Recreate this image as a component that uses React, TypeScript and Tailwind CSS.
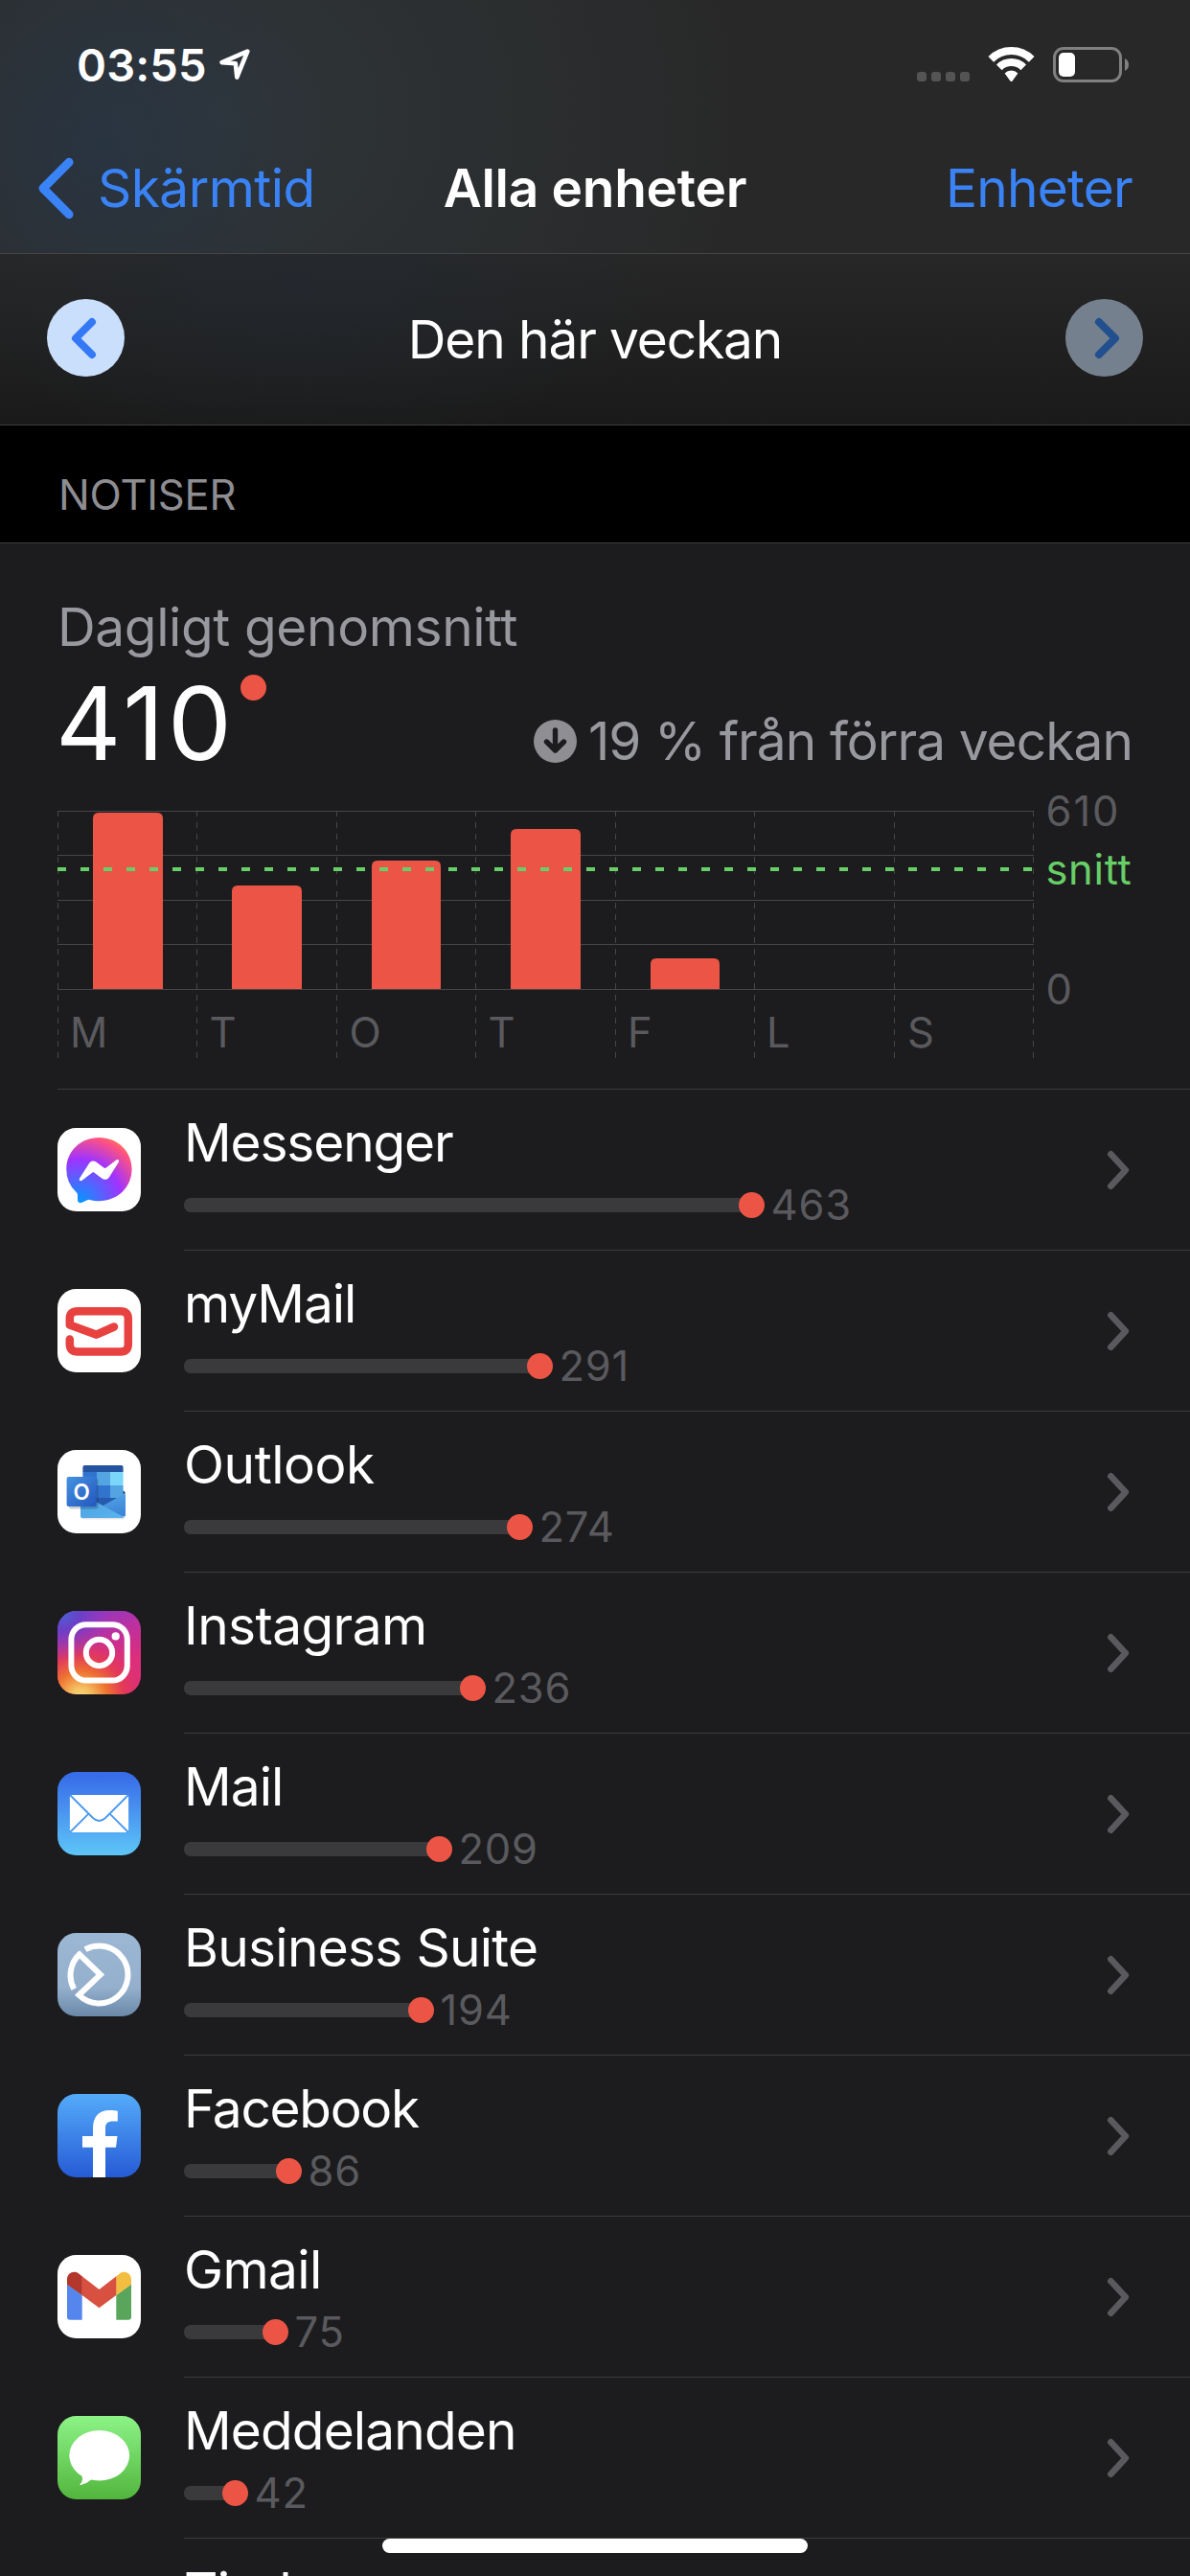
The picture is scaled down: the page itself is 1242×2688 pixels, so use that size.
import type { ReactNode } from "react";

type Day = { label: string; x: number; bar?: { x: number; y: number; w: number } };

const days: Day[] = [
  { label: "M", x: 60.5, bar: { x: 97, y: 848, w: 73 } },
  { label: "T", x: 205.5, bar: { x: 242, y: 924, w: 73 } },
  { label: "O", x: 351.5, bar: { x: 388, y: 898, w: 72 } },
  { label: "T", x: 496.5, bar: { x: 533, y: 865, w: 73 } },
  { label: "F", x: 642.5, bar: { x: 679, y: 1000, w: 72 } },
  { label: "L", x: 787.5 },
  { label: "S", x: 933.5 },
];

function StatusBar() {
  return (
    <div className="flex h-[132px] items-start justify-between">
      <div className="flex pt-[46px] pl-20">
        <span className="w-[146px] text-[47px] leading-[44px] font-semibold tracking-[0.14px]">03:55</span>
        <svg className="mt-[2px] h-[38px] w-[38px]" viewBox="226 48 38 38" fill="none">
          <path
            d="M258.3 53.6L231.6 65.2L245.8 66.3L247.3 80.6Z"
            stroke="#fff"
            strokeWidth="4.6"
            strokeLinejoin="round"
          />
        </svg>
      </div>
      <svg className="mt-[45px] mr-[60px] h-[45px] w-[230px]" viewBox="952 45 230 45" fill="none">
        <g fill="#545454">
          <rect x="957" y="75" width="10" height="10" rx="3" />
          <rect x="972" y="75" width="10" height="10" rx="3" />
          <rect x="987" y="75" width="10" height="10" rx="3" />
          <rect x="1002" y="75" width="10" height="10" rx="3" />
        </g>
        <g stroke="#fff" strokeWidth="8">
          <path d="M1034.3 61.8A30 30 0 0 1 1076.7 61.8" />
          <path d="M1042.8 70.3A18 18 0 0 1 1068.2 70.3" />
        </g>
        <path d="M1048.6 76.4A9.8 9.8 0 0 1 1062.4 76.4L1056.6 84.4Q1055.5 85.6 1054.4 84.4Z" fill="#fff" />
        <rect x="1100.5" y="50.5" width="69" height="34" rx="9.5" stroke="#808080" strokeWidth="3" />
        <path d="M1174 61Q1178 63 1178 67.5T1174 74Z" fill="#808080" />
        <rect x="1105" y="55" width="17" height="25" rx="5" fill="#fff" />
      </svg>
    </div>
  );
}

function NavBar() {
  return (
    <div className="grid h-[132px] grid-cols-[1fr_auto_1fr] items-center pb-1 text-[55px] leading-[66px]">
      <div className="flex items-center pl-9 text-[#3a83f7]">
        <svg className="h-[68px] w-[44px]" viewBox="36 162 44 68" fill="none">
          <path
            d="M72 169.3L45 196.5L72 223.7"
            stroke="#3a83f7"
            strokeWidth="9"
            strokeLinecap="round"
            strokeLinejoin="round"
          />
        </svg>
        <span className="ml-[22px] tracking-[-0.56px]">Skärmtid</span>
      </div>
      <h1 className="font-semibold tracking-[-0.27px]">Alla enheter</h1>
      <span className="pr-[60px] text-right tracking-[-0.78px] text-[#3a83f7]">Enheter</span>
    </div>
  );
}

function WeekBar() {
  return (
    <div className="flex h-[179px] items-center justify-between border-b border-[#3f3f40] bg-[radial-gradient(ellipse_400px_170px_at_310px_30px,#232a3399,#232a3300),linear-gradient(#272727,#1a1a1a)] px-[49px]">
      <span className="mb-[3px] flex size-[81px] items-center justify-center rounded-full bg-[#c9dffc]">
        <svg className="mr-1 size-[46px]" viewBox="0 0 46 46" fill="none">
          <path d="M31 6L14 23L31 40" stroke="#3478f6" strokeWidth="8" strokeLinecap="round" strokeLinejoin="round" />
        </svg>
      </span>
      <h2 className="text-[55px] leading-[66px] tracking-[-1.13px]">Den här veckan</h2>
      <span className="mb-[3px] flex size-[81px] items-center justify-center rounded-full bg-[#75808e]">
        <svg className="ml-1 size-[46px]" viewBox="0 0 46 46" fill="none">
          <path d="M15 6L32 23L15 40" stroke="#22508f" strokeWidth="8" strokeLinecap="round" strokeLinejoin="round" />
        </svg>
      </span>
    </div>
  );
}

function Summary() {
  return (
    <div className="px-[60px] pt-[54px]">
      <p className="text-[55px] leading-[66px] tracking-[-0.39px] text-[#98989f]">Dagligt genomsnitt</p>
      <div className="mt-[14px] flex h-[107px] items-start">
        <span className="-ml-[2px] text-[106px] leading-[107px] tracking-[3.74px]">410</span>
        <span className="mt-[3px] ml-[5px] size-[27px] rounded-full bg-[#ec5545]" />
        <div className="mt-[39px] ml-auto flex h-[66px] items-center text-[#98989f]">
          <svg className="mr-3 size-[45px]" viewBox="0 0 45 45" fill="none">
            <circle cx="22.5" cy="22.5" r="22.5" fill="#8e8e93" />
            <path
              d="M22.5 11V32M13.5 23L22.5 32L31.5 23"
              stroke="#1c1c1e"
              strokeWidth="5.4"
              strokeLinecap="round"
              strokeLinejoin="round"
            />
          </svg>
          <span className="text-[55px] leading-[66px] tracking-[-0.93px]">19 % från förra veckan</span>
        </div>
      </div>
    </div>
  );
}

function Chart() {
  return (
    <svg
      className="mt-3 block h-[316px] w-[1242px] font-['Inter',sans-serif] text-[43.5px]"
      viewBox="0 820 1242 316"
      fill="none"
    >
      <g stroke="#464649" strokeWidth="1">
        {[846.5, 892.5, 939.5, 985.5, 1032.5].map((y) => (
          <path key={y} d={`M60 ${y}H1079`} />
        ))}
        {[...days.map((d) => d.x), 1078.5].map((x) => (
          <path key={x} d={`M${x} 846V1104`} strokeDasharray="6 6" />
        ))}
      </g>
      {days.map(
        ({ x, bar }) =>
          bar && (
            <path
              key={x}
              d={`M${bar.x} 1032V${bar.y + 6}q0 -6 6 -6h${bar.w - 12}q6 0 6 6V1032Z`}
              fill="#ec5545"
            />
          ),
      )}
      <path d="M60 907H1077" stroke="#68ce67" strokeWidth="4" strokeDasharray="9 15" />
      <g fill="#5a5a5e">
        {days.map(({ label, x }) => (
          <text key={x} x={x + (label === "T" ? 13 : label === "O" ? 13 : label === "S" ? 13.5 : 12.5)} y="1093">
            {label}
          </text>
        ))}
        <text x="1091.5" y="862" letterSpacing="1.9">
          610
        </text>
        <text x="1091.5" y="1047.5">
          0
        </text>
      </g>
      <text x="1091.5" y="922.5" fill="#68ce67" letterSpacing="0.66">
        snitt
      </text>
    </svg>
  );
}

function MessengerIcon() {
  return (
    <>
      <defs>
        <radialGradient id="messenger" cx="0.19" cy="0.99" r="1.09">
          <stop offset="0" stopColor="#0099ff" />
          <stop offset="0.61" stopColor="#a033ff" />
          <stop offset="0.93" stopColor="#ff5280" />
          <stop offset="1" stopColor="#ff7061" />
        </radialGradient>
      </defs>
      <rect width="87" height="87" fill="#fff" />
      <path
        transform="translate(9.3 10) scale(2.845)"
        fill="url(#messenger)"
        d="M.001 11.639C.001 4.949 5.241 0 12.001 0S24 4.95 24 11.639c0 6.689-5.24 11.638-12 11.638-1.21 0-2.38-.16-3.47-.46a.96.96 0 00-.64.05l-2.39 1.05a.96.96 0 01-1.35-.85l-.07-2.14a.97.97 0 00-.32-.68A11.39 11.389 0 01.002 11.64zm8.32-2.19l-3.52 5.6c-.35.53.32 1.139.82.75l3.79-2.87c.26-.2.6-.2.87 0l2.8 2.1c.84.63 2.04.4 2.6-.48l3.52-5.6c.35-.53-.32-1.13-.82-.75l-3.79 2.87c-.25.2-.6.2-.86 0l-2.8-2.1a1.8 1.8 0 00-2.61.48z"
      />
    </>
  );
}

function MyMailIcon() {
  return (
    <>
      <rect width="87" height="87" fill="#fff" />
      <path
        d="M12.8 52.5V57.5Q12.8 65.5 20.8 65.5H66Q73.8 65.5 73.8 57.5V31Q73.8 23.2 66 23.2H20.8Q12.8 23.2 12.8 31V37.6L40.7 47.7L59 39.5"
        stroke="#e74240"
        strokeWidth="8.5"
        strokeLinecap="round"
        strokeLinejoin="round"
      />
    </>
  );
}

function OutlookIcon() {
  return (
    <>
      <defs>
        <linearGradient id="outlook-tile" x1="0" y1="0" x2="1" y2="1">
          <stop offset="0" stopColor="#4592e0" />
          <stop offset="1" stopColor="#2357bf" />
        </linearGradient>
        <linearGradient id="outlook-left" x1="0" y1="0" x2="1" y2="1">
          <stop offset="0" stopColor="#4c9fe0" />
          <stop offset="1" stopColor="#5cb4ee" />
        </linearGradient>
        <linearGradient id="outlook-right" x1="0" y1="0" x2="0.3" y2="1">
          <stop offset="0" stopColor="#56a9e6" />
          <stop offset="1" stopColor="#3e86d8" />
        </linearGradient>
      </defs>
      <rect width="87" height="87" fill="#fff" />
      <rect x="24.5" y="61" width="46" height="11.5" rx="2" fill="#00000018" />
      <path d="M68 42L71 44.5L68 47Z" fill="#123b6d" />
      <path d="M26.4 23V18Q26.4 16 28.4 16H66.6Q68.6 16 68.6 18V23Z" fill="#2454a0" />
      <rect x="26.4" y="23" width="14.8" height="28" fill="#3074cd" />
      <rect x="41" y="23" width="14" height="14" fill="#54a4e2" />
      <rect x="55" y="23" width="13.6" height="14" fill="#7bd7fa" />
      <rect x="41" y="37" width="14" height="13.5" fill="#3074cd" />
      <rect x="55" y="37" width="13.6" height="13.5" fill="#54a4e2" />
      <path d="M26.4 50H64L54 60H30Z" fill="#265aae" />
      <path d="M71 45V69L66 70L40 62L48.5 57.5Z" fill="url(#outlook-right)" />
      <path d="M24 47L41 54.5L69.5 70.2Q68.5 71 67.5 71H26Q24 71 24 69Z" fill="url(#outlook-left)" />
      <rect x="12" y="30" width="30.5" height="31.5" rx="2" fill="#00000030" />
      <rect x="9.6" y="28" width="31.1" height="31" rx="2" fill="url(#outlook-tile)" />
      <text
        x="25.1"
        y="51.8"
        textAnchor="middle"
        fill="#fff"
        className="font-['Inter',sans-serif] text-[22.5px] font-semibold"
      >
        O
      </text>
    </>
  );
}

function InstagramIcon() {
  return (
    <>
      <defs>
        <linearGradient id="insta-base" x1="0.3" y1="0" x2="0.7" y2="1">
          <stop offset="0" stopColor="#8a3ac8" />
          <stop offset="0.35" stopColor="#bb30a0" />
          <stop offset="0.7" stopColor="#dc2e7c" />
          <stop offset="1" stopColor="#dc2f78" />
        </linearGradient>
        <radialGradient id="insta-warm" cx="0.28" cy="1.05" r="0.85">
          <stop offset="0" stopColor="#f9de85" />
          <stop offset="0.14" stopColor="#f6c463" />
          <stop offset="0.38" stopColor="#ee7330" />
          <stop offset="0.62" stopColor="#e63b52" stopOpacity="0.85" />
          <stop offset="1" stopColor="#d92e7f" stopOpacity="0" />
        </radialGradient>
        <radialGradient id="insta-cool" cx="0.05" cy="0" r="0.6">
          <stop offset="0" stopColor="#4667d8" />
          <stop offset="0.4" stopColor="#6240c8" stopOpacity="0.8" />
          <stop offset="1" stopColor="#8a3ac8" stopOpacity="0" />
        </radialGradient>
      </defs>
      <rect width="87" height="87" fill="url(#insta-base)" />
      <rect width="87" height="87" fill="url(#insta-warm)" />
      <rect width="87" height="87" fill="url(#insta-cool)" />
      <g stroke="#fff" strokeWidth="6">
        <rect x="14.4" y="14.2" width="58.4" height="58.4" rx="15.5" />
        <circle cx="43.5" cy="43.5" r="13.7" />
      </g>
      <circle cx="60.7" cy="26.4" r="4.1" fill="#fff" />
    </>
  );
}

function MailIcon() {
  return (
    <>
      <defs>
        <linearGradient id="mail" x1="0" y1="0" x2="0" y2="1">
          <stop offset="0.05" stopColor="#386de9" />
          <stop offset="1" stopColor="#5ec6f8" />
        </linearGradient>
      </defs>
      <rect width="87" height="87" fill="url(#mail)" />
      <rect x="12.9" y="24" width="61.2" height="39" rx="2.2" fill="#fff" />
      <g stroke="#4b98f1" strokeWidth="1.8">
        <path d="M13 24L37 48Q43.5 54 50 48L74 24" />
        <path d="M13 63L32.4 43.6M74 63L54.6 43.6" />
      </g>
    </>
  );
}

function BusinessSuiteIcon() {
  return (
    <>
      <defs>
        <linearGradient id="business" x1="0" y1="0" x2="0" y2="1">
          <stop offset="0" stopColor="#9cb7d3" />
          <stop offset="0.65" stopColor="#94b0cd" />
          <stop offset="1" stopColor="#6b88a9" />
        </linearGradient>
      </defs>
      <rect width="87" height="87" fill="url(#business)" />
      <path
        d="M17.2 58.5A30 30 0 0 1 23 22.3L44.8 43.5L22.3 64.7A30 30 0 1 0 29 17.2"
        stroke="#fff"
        strokeWidth="6"
      />
    </>
  );
}

function FacebookIcon() {
  return (
    <>
      <defs>
        <linearGradient id="facebook" x1="0" y1="0" x2="0" y2="1">
          <stop offset="0" stopColor="#54abf9" />
          <stop offset="1" stopColor="#265bd6" />
        </linearGradient>
      </defs>
      <rect width="87" height="87" fill="url(#facebook)" />
      <path
        d="M37 87V55.7H26V44H37V36C37 23.5 43.5 17 54 17C58 17 61 17.4 62.8 17.8V28.4H58C52.3 28.4 50 30.8 50 35.5V44H62.5L61 55.7H50V87Z"
        fill="#fff"
      />
    </>
  );
}

function GmailIcon() {
  return (
    <>
      <rect width="87" height="87" fill="#fff" />
      <path d="M10 30.4L25.7 42V67.7H13Q10 67.7 10 64.7Z" fill="#5486ee" />
      <path d="M77 30.4L61.3 42V67.7H74Q77 67.7 77 64.7Z" fill="#5aa55c" />
      <path d="M10 30.7V25.5C10 18.6 17.5 15.4 22.6 19.7L25.9 22.4V42.2Z" fill="#b2362b" />
      <path d="M77 30.7V25.5C77 18.6 69.5 15.4 64.4 19.7L61.1 22.4V42.2Z" fill="#f2be42" />
      <path d="M25.7 22.3L43.5 36L61.3 22.3V42L43.5 55.3L25.7 42Z" fill="#d85140" />
    </>
  );
}

function MessagesIcon() {
  return (
    <>
      <defs>
        <linearGradient id="messages" x1="0" y1="0" x2="0" y2="1">
          <stop offset="0" stopColor="#8cf386" />
          <stop offset="1" stopColor="#52b63d" />
        </linearGradient>
      </defs>
      <rect width="87" height="87" fill="url(#messages)" />
      <ellipse cx="43.7" cy="41.3" rx="31.4" ry="26.3" fill="#fff" />
      <path d="M24 60Q28.5 66 23.4 71.4Q23.2 72.2 24.3 72Q31 70.4 35.5 66.2Z" fill="#fff" />
    </>
  );
}

type AppRow = { name: string; count?: number; tracking: string; icon?: ReactNode };

const apps: AppRow[] = [
  { name: "Messenger", count: 463, tracking: "tracking-[-1.15px]", icon: <MessengerIcon /> },
  { name: "myMail", count: 291, tracking: "tracking-[-1.09px]", icon: <MyMailIcon /> },
  { name: "Outlook", count: 274, tracking: "tracking-[-0.47px]", icon: <OutlookIcon /> },
  { name: "Instagram", count: 236, tracking: "tracking-[-0.6px]", icon: <InstagramIcon /> },
  { name: "Mail", count: 209, tracking: "tracking-[-0.96px]", icon: <MailIcon /> },
  { name: "Business Suite", count: 194, tracking: "tracking-[-0.73px]", icon: <BusinessSuiteIcon /> },
  { name: "Facebook", count: 86, tracking: "tracking-[-1.3px]", icon: <FacebookIcon /> },
  { name: "Gmail", count: 75, tracking: "tracking-[-0.6px]", icon: <GmailIcon /> },
  { name: "Meddelanden", count: 42, tracking: "tracking-[-0.86px]", icon: <MessagesIcon /> },
  { name: "Tinder", tracking: "tracking-[-0.8px]" },
];

function Row({ name, count, tracking, icon }: AppRow) {
  return (
    <li className="group flex h-[168px] pl-[60px]">
      <div className="w-[132px] border-t border-transparent pt-10 group-first:border-[#3b3b3e]">
        {icon && (
          <svg className="size-[87px] rounded-[19.5px]" viewBox="0 0 87 87" fill="none">
            {icon}
          </svg>
        )}
      </div>
      <div className="flex flex-1 items-start border-t border-[#3b3b3e]">
        <div className="flex-1 pt-[22px]">
          <p className={`text-[55px] leading-[66px] ${tracking}`}>{name}</p>
          {count !== undefined && (
            <div className="mt-[10px] flex h-[45px] items-center">
              <span
                className="h-[15px] rounded-l-[7px] bg-[#3a3a3c]"
                style={{ width: Math.round(count * 1.281 - 1.3) }}
              />
              <span className="-ml-[13px] size-[27px] rounded-full bg-[#ec5545]" />
              <span className="mb-[2px] ml-[6.5px] text-[43.5px] leading-[44px] tracking-[0.8px] text-[#5a5a5e]">
                {count}
              </span>
            </div>
          )}
        </div>
        <svg className="mt-[62px] mr-[63px] h-[44px] w-[27px]" viewBox="0 0 27 44" fill="none">
          <path d="M7.3 5.3L22.8 22L7.3 38.7" stroke="#5a5a5e" strokeWidth="6.6" strokeLinecap="round" strokeLinejoin="round" />
        </svg>
      </div>
    </li>
  );
}

export default function App() {
  return (
    <main className="relative h-[2688px] w-[1242px] overflow-hidden bg-[#1c1c1e] font-['Inter',sans-serif] text-white">
      <header className="border-b border-[#454546] bg-[radial-gradient(circle_240px_at_110px_150px,#26364a99,#26364a00),radial-gradient(ellipse_560px_500px_at_230px_120px,#2f3538,#2f353800),linear-gradient(#282828,#282828)]">
        <StatusBar />
        <NavBar />
      </header>
      <WeekBar />
      <div className="flex h-[123px] items-center border-b border-[#3b3b3e] bg-black pt-[22px] pl-[61px]">
        <span className="text-[43.5px] leading-[52px] tracking-[-0.18px] text-[#8d8d92]">NOTISER</span>
      </div>
      <Summary />
      <Chart />
      <ul>
        {apps.map((app) => (
          <Row key={app.name} {...app} />
        ))}
      </ul>
      <div className="absolute bottom-6 left-[399px] h-[15px] w-[444px] rounded-full bg-white" />
    </main>
  );
}
